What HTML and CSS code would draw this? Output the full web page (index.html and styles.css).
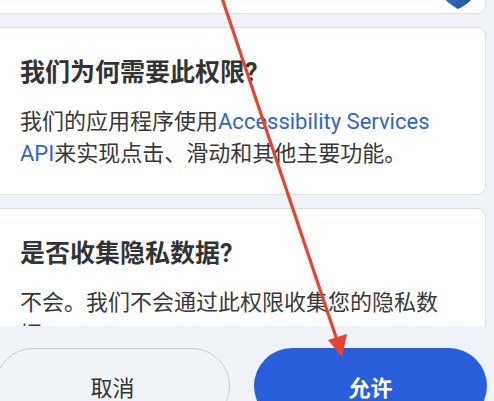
FILE: index.html
```html
<!DOCTYPE html>
<html lang="zh-CN">
<head>
    <meta charset="UTF-8">
    <meta name="viewport" content="width=device-width, initial-scale=1.0">
    <title>权限说明</title>
    <link rel="stylesheet" href="styles.css">
</head>
<body>
    <div class="screen">
        <div class="list">
            <div class="card card-top">
                <svg class="badge" width="30" height="30" viewBox="0 0 30 30">
                    <defs>
                        <linearGradient id="shield" x1="0" y1="0" x2="1" y2="1">
                            <stop offset="0" stop-color="#3f7fd6"/>
                            <stop offset="1" stop-color="#1e4f9c"/>
                        </linearGradient>
                    </defs>
                    <path d="M0 0 H30 V18 C28 22 22 27 15 30 C9 27 3 22 0 18 Z" fill="url(#shield)"/>
                </svg>
            </div>

            <div class="card">
                <h2 class="card-title">我们为何需要此权限?</h2>
                <p class="card-text">我们的应用程序使用<span class="link">Accessibility Services API</span>来实现点击、滑动和其他主要功能。</p>
            </div>

            <div class="card">
                <h2 class="card-title">是否收集隐私数据?</h2>
                <p class="card-text">不会。我们不会通过此权限收集您的隐私数据。</p>
            </div>
        </div>

        <div class="actions">
            <button class="btn btn-cancel">取消</button>
            <button class="btn btn-allow">允许</button>
        </div>
    </div>

    <svg class="arrow" width="494" height="401" viewBox="0 0 494 401">
        <line x1="222" y1="-2" x2="339" y2="346" stroke="#e8432d" stroke-width="3.2" stroke-linecap="round"/>
        <polygon points="328,340 347,334 342,357" fill="#e8432d"/>
    </svg>
</body>
</html>
```

FILE: styles.css
```css
html, body {
    margin: 0;
    height: 100%;
    overflow: hidden;
}
body {
    background-color: #eff2f7;
    font-family: Roboto, "Noto Sans CJK SC", sans-serif;
    color: #333;
}
.screen {
    width: 510px;
    margin-left: -16px;
    display: flex;
    flex-direction: column;
}
.list {
    flex-shrink: 0;
    height: 326px;
    overflow: hidden;
    padding: 0 8px;
    display: flex;
    flex-direction: column;
    gap: 13px;
}
.card {
    flex-shrink: 0;
    background-color: #fff;
    border: 1px solid #dde1e7;
    border-radius: 9px;
    padding: 30px 29px 24px 27px;
}
.card-top {
    height: 14px;
    margin-top: -1px;
    padding: 0 12px 0 0;
    border-top: none;
    border-radius: 0 0 9px 9px;
    display: flex;
    justify-content: flex-end;
    align-items: flex-start;
    overflow: hidden;
}
.badge {
    margin-top: -20px;
}
.card-title {
    margin: 0;
    font-size: 25px;
    line-height: 30px;
    font-weight: bold;
    color: #333;
}
.card-text {
    margin: 18px 0 0;
    font-size: 22px;
    line-height: 32px;
    color: #383838;
}
.link {
    color: #2f64d4;
}
.actions {
    flex-shrink: 0;
    display: flex;
    gap: 24px;
    padding: 22px 7px 0 11px;
}
.btn {
    flex: 1;
    height: 76px;
    border-radius: 38px;
    font-family: Roboto, "Noto Sans CJK SC", sans-serif;
    font-size: 22px;
    cursor: pointer;
}
.btn-cancel {
    background-color: transparent;
    border: 1px solid #c9cbcf;
    color: #333;
}
.btn-allow {
    background-color: #2a5fdb;
    border: none;
    color: #fff;
    font-weight: bold;
}
.arrow {
    position: absolute;
    left: 0;
    top: 0;
    pointer-events: none;
}
```
